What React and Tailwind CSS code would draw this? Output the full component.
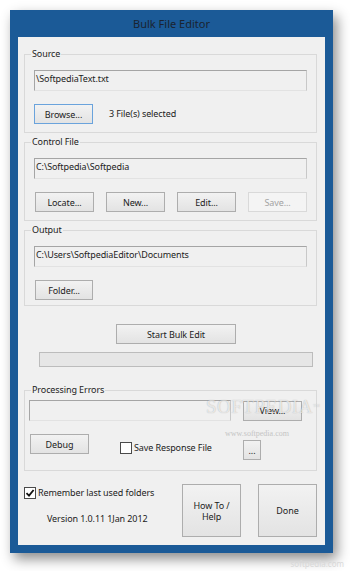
import React from "react";

const font = { fontFamily: '"Noto Sans", "Liberation Sans", sans-serif' };

function Btn({ children, className = "", blue = false, disabled = false }) {
  return (
    <div
      className={
        "flex items-center justify-center border text-[9px] leading-[11px] tracking-[-0.1px] bg-gradient-to-b " +
        (blue
          ? "border-[#6aa3dc] from-[#f2f2f2] to-[#e3e3e3] text-[#1c1c1c] "
          : disabled
          ? "border-[#d9d9d9] from-[#f4f4f4] to-[#f4f4f4] text-[#a3a3a3] "
          : "border-[#adadad] from-[#f2f2f2] to-[#e3e3e3] text-[#1c1c1c] ") +
        className
      }
    >
      {children}
    </div>
  );
}

function Field({ children, className = "" }) {
  return (
    <div
      className={
        "border border-t-[#a5a5a5] border-l-[#a5a5a5] border-r-[#c8c8c8] border-b-[#e2e2e2] bg-[#f0f0f0] text-[9px] leading-[12px] tracking-[-0.1px] text-[#1c1c1c] pl-[1px] pt-[2px] " +
        className
      }
    >
      {children}
    </div>
  );
}

function Group({ label, children, className = "" }) {
  return (
    <fieldset className={"border border-[#d9d9d9] w-[293px] ml-[6px] " + className}>
      <legend className="ml-[6px] px-[1px] text-[9px] leading-[14px] tracking-[-0.1px] text-[#1c1c1c]">{label}</legend>
      {children}
    </fieldset>
  );
}

function Check({ checked }) {
  return (
    <div className="w-[12px] h-[12px] border border-[#4a4a4a] bg-white flex items-center justify-center shrink-0">
      {checked && (
        <svg width="10" height="10" viewBox="0 0 10 10">
          <path d="M1.5 5.2 L4 7.6 L8.6 2" fill="none" stroke="#111" strokeWidth="1.8" />
        </svg>
      )}
    </div>
  );
}

const txt = "text-[9px] leading-[12px] tracking-[-0.1px] text-[#1c1c1c]";

export default function App() {
  return (
    <div className="w-[350px] h-[571px] bg-white pt-[10px] pl-[10px] relative overflow-hidden" style={font}>
      <div className="w-[323px] h-[543px] bg-[#1b5a97] px-[8px] pb-[8px] flex flex-col shadow-[4px_6px_12px_rgba(0,0,0,0.45)]">
        <div className="h-[27px] flex items-center justify-center text-[11px] text-[#1a2330] pt-[1px]">Bulk File Editor</div>
        <div className="flex-1 bg-[#f0f0f0] relative flex flex-col">
          <Group label="Source" className="mt-[10px] pb-[8px]">
            <Field className="ml-[9px] mt-[9px] w-[273px] h-[21px]">\SoftpediaText.txt</Field>
            <div className="flex items-center mt-[13px] ml-[9px]">
              <Btn blue className="w-[59px] h-[20px]">Browse...</Btn>
              <span className={"ml-[16px] " + txt}>3 File(s) selected</span>
            </div>
          </Group>

          <Group label="Control File" className="mt-[2px] pb-[8px]">
            <Field className="ml-[9px] mt-[9px] w-[273px] h-[21px]">C:\Softpedia\Softpedia</Field>
            <div className="flex items-center mt-[13px] ml-[10px] gap-[12px]">
              <Btn className="w-[59px] h-[20px]">Locate...</Btn>
              <Btn className="w-[59px] h-[20px]">New...</Btn>
              <Btn className="w-[59px] h-[20px]">Edit...</Btn>
              <Btn disabled className="w-[59px] h-[20px]">Save...</Btn>
            </div>
          </Group>

          <Group label="Output" className="mt-[2px] pb-[5px]">
            <Field className="ml-[9px] mt-[9px] w-[273px] h-[21px]">C:\Users\SoftpediaEditor\Documents</Field>
            <div className="flex items-center mt-[13px] ml-[10px]">
              <Btn className="w-[58px] h-[20px]">Folder...</Btn>
            </div>
          </Group>

          <div className="flex mt-[18px] ml-[98px]">
            <Btn className="w-[120px] h-[20px]">Start Bulk Edit</Btn>
          </div>
          <div className="ml-[21px] mt-[8px] w-[274px] h-[15px] border border-[#bcbcbc] bg-[#e6e6e6]" />

          <Group label="Processing Errors" className="mt-[16px] pb-[10px]">
            <div className="flex items-center mt-[3px] ml-[4px]">
              <Field className="w-[202px] h-[21px]"></Field>
              <Btn className="ml-[12px] w-[59px] h-[20px]">View...</Btn>
            </div>
            <div className="flex items-start mt-[13px] ml-[5px]">
              <Btn className="w-[59px] h-[20px]">Debug</Btn>
              <div className="flex items-center ml-[31px] mt-[8px] w-[123px]">
                <Check />
                <span className={"ml-[2px] " + txt}>Save Response File</span>
              </div>
              <Btn className="mt-[6px] w-[18px] h-[20px]">...</Btn>
            </div>
          </Group>

          <div className="flex mt-[13px] ml-[6px]">
            <div className="flex flex-col w-[158px]">
              <div className="flex items-center mt-[3px]">
                <Check checked />
                <span className={"ml-[2px] " + txt}>Remember last used folders</span>
              </div>
              <div className={"mt-[14px] ml-[23px] " + txt}>Version 1.0.11 1Jan 2012</div>
            </div>
            <Btn className="w-[59px] h-[53px] text-center">How To /<br />Help</Btn>
            <Btn className="ml-[17px] w-[59px] h-[53px]">Done</Btn>
          </div>

          <div
            className="absolute left-[188px] top-[360px] text-[19px] leading-[20px] tracking-[0.5px] text-white/70 pointer-events-none"
            style={{ fontFamily: '"Liberation Serif", serif', textShadow: "0 0 1px rgba(0,0,0,0.3)" }}
          >
            SOFTPEDIA<span className="text-[7px] align-top">™</span>
          </div>
          <div
            className="absolute left-[207px] top-[392px] text-[8px] leading-[10px] text-[#c4c4c4] pointer-events-none"
            style={{ fontFamily: '"Liberation Serif", serif' }}
          >
            www.softpedia.com
          </div>
        </div>
      </div>
      <div className="absolute right-[6px] bottom-[2px] text-[8px] leading-[10px] text-[#d8d8d8]">softpedia.com</div>
    </div>
  );
}
